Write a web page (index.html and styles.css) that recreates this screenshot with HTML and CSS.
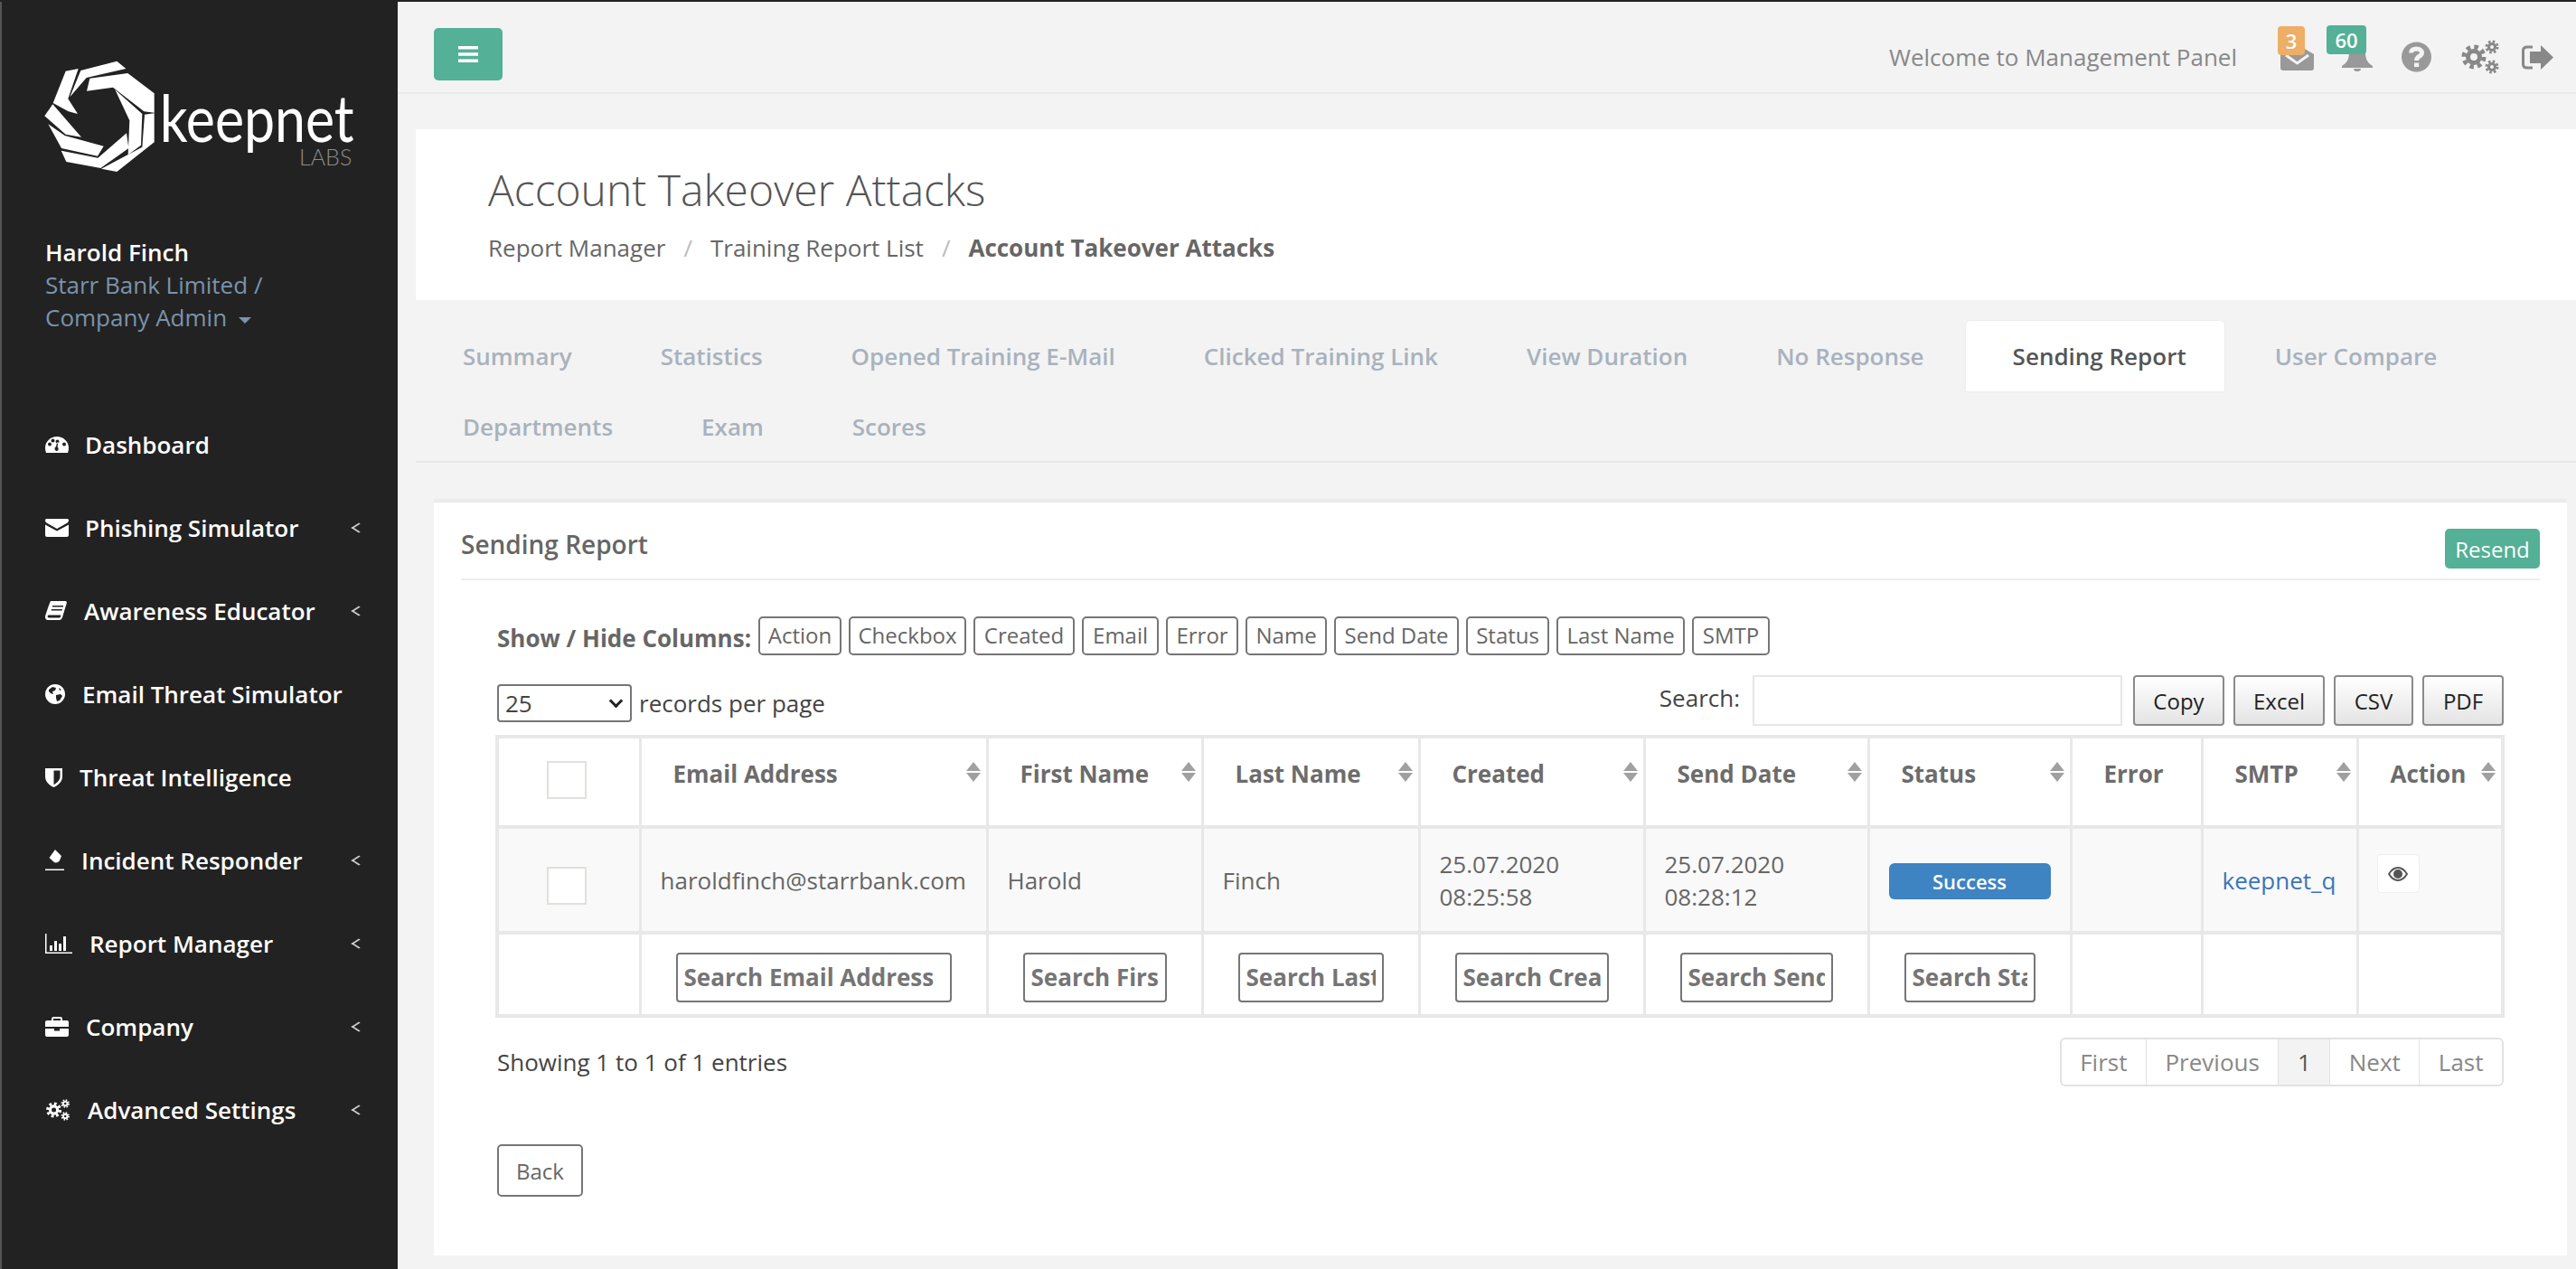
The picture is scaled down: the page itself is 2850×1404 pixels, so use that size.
FILE: index.html
```html
<!DOCTYPE html>
<html lang="en">
<head>
    <meta charset="UTF-8">
    <title>Account Takeover Attacks</title>
    <link rel="stylesheet" href="styles.css">
</head>
<body>
<div class="page">

    <aside class="sidebar">
        <div class="logo">
            <svg class="logo-mark" viewBox="0 0 1140 480" width="380" height="160">
                <g fill="#fff">
                    <polygon points="86,192 128,86 170,78 136,178 168,228 137,220"/>
                    <polygon points="142,172 178,84 298,53 328,78 197,108"/>
                    <polygon points="198,152 208,110 334,93 422,160 422,224 388,220 285,140"/>
                    <polygon points="292,148 382,228 378,332 335,364 340,250"/>
                    <polygon points="390,230 422,226 422,322 298,420 246,410 382,338"/>
                    <polygon points="113,350 235,374 330,292 337,342 244,408 130,387"/>
                    <polygon points="70,262 125,300 254,335 234,368 114,342"/>
                    <polygon points="58,235 85,196 180,305 128,296"/>
                </g>
                <text class="logo-word" x="440" y="322" textLength="645" lengthAdjust="spacingAndGlyphs">keepnet</text>
                <text class="logo-labs" x="903" y="400" textLength="175" lengthAdjust="spacingAndGlyphs">LABS</text>
            </svg>
        </div>
        <div class="profile">
            <strong>Harold Finch</strong>
            <span>Starr Bank Limited /</span>
            <span>Company Admin <i class="caret"></i></span>
        </div>
        <nav class="menu">
            <a class="menu-item">
                <svg class="ico" width="26" height="20" viewBox="0 0 26 20"><path fill="#fff" fill-rule="evenodd" d="M13 1C6 1 0 6.500 0 13.500c0 2 .4 3.700 1 5.500h24c.7-1.800 1-3.500 1-5.500C26 6.500 20 1 13 1zM5 11.500a2 2 0 1 1 0-4 2 2 0 0 1 0 4zm3.500-4a2 2 0 1 1 0-4 2 2 0 0 1 0 4zm7-1a2 2 0 1 1-4 0 2 2 0 0 1 4 0zM13 17a2.500 2.500 0 0 1-1.200-4.700L13.500 7l1 .3-1 5.200A2.500 2.500 0 0 1 13 17zm8-5.500a2 2 0 1 1 0-4 2 2 0 0 1 0 4z"/></svg>
                <span class="gap-18">Dashboard</span>
            </a>
            <a class="menu-item">
                <svg class="ico" width="26" height="20" viewBox="0 0 26 20"><path fill="#fff" d="M1.500 0h23C25.500 0 26 .8 26 2c0 1-1 2-2 2.800L13 11 2 4.800C1 4.200 0 3 0 2 0 .8.500 0 1.500 0zM0 6.500l13 7 13-7V18c0 1-.8 2-2 2H2c-1.200 0-2-1-2-2z"/></svg>
                <span class="gap-18">Phishing Simulator</span>
                <i class="chev"></i>
            </a>
            <a class="menu-item">
                <svg class="ico" width="24" height="22" viewBox="0 0 24 22"><path fill="#fff" fill-rule="evenodd" d="M6 0h17l1 1.500L19 18c-.4 1.400-1.500 3-3.500 3H3c-2 0-3-1.500-3-3.500C0 16.500 5 1.500 6 0zm2 5v1.500h12V5zM6.800 9v1.500h12V9zM4 15.500c-1.300 0-1.600 1.500-1.200 2.300.3.500.8.700 1.400.7h11.500c.5 0 1-.4 1.200-1l.5-2z"/></svg>
                <span class="gap-19">Awareness Educator</span>
                <i class="chev"></i>
            </a>
            <a class="menu-item">
                <svg class="ico" width="22" height="22" viewBox="0 0 22 22"><circle cx="11" cy="11" r="11" fill="#fff"/><path fill="#222" d="M4 6l4-3 4 1-1 3-3 1 1 3-3-1-2-2zM12 12l5-1 2 2-3 5-3 1-1-4zM15 4l3 2-2 1z"/></svg>
                <span class="gap-19">Email Threat Simulator</span>
            </a>
            <a class="menu-item">
                <svg class="ico" width="19" height="22" viewBox="0 0 19 22"><path fill="#fff" fill-rule="evenodd" d="M0 1h19v9c0 6-5 10-9.500 12C5 20 0 16 0 10zM9.500 3.500v15.700C13 17.500 16.500 14 16.500 10V3.500z"/></svg>
                <span class="gap-19">Threat Intelligence</span>
            </a>
            <a class="menu-item">
                <svg class="ico" width="21" height="24" viewBox="0 0 21 24"><path fill="#fff" d="M11 0l7 7-2 5c-1 2-4 3-6 2L4.500 9zM0 21.500h21V23H0z"/></svg>
                <span class="gap-19">Incident Responder</span>
                <i class="chev"></i>
            </a>
            <a class="menu-item">
                <svg class="ico" width="30" height="22" viewBox="0 0 30 22"><path fill="#fff" d="M0 0h1.500v20.500H30V22H0zM5 13h3v6H5zM10 8h3v11h-3zM15 11h3v8h-3zM20 3h3v16h-3z"/></svg>
                <span class="gap-19">Report Manager</span>
                <i class="chev"></i>
            </a>
            <a class="menu-item">
                <svg class="ico" width="26" height="22" viewBox="0 0 26 22"><path fill="#fff" fill-rule="evenodd" d="M9 0h8c1 0 2 1 2 2v2h5c1.200 0 2 .8 2 2v5H0V6c0-1.200.8-2 2-2h5V2c0-1 1-2 2-2zm0 2v2h8V2zM0 13h10v2.500h6V13h10v7c0 1.200-.8 2-2 2H2c-1.200 0-2-.8-2-2z"/></svg>
                <span class="gap-19">Company</span>
                <i class="chev"></i>
            </a>
            <a class="menu-item">
                <svg class="ico" width="28" height="24" viewBox="0 0 42 38"><g fill="none" stroke="#fff"><circle cx="14" cy="19" r="6.500" stroke-width="5"/><circle cx="14" cy="19" r="11" stroke-width="5" stroke-dasharray="4.500 4.140"/><circle cx="34" cy="8" r="3.500" stroke-width="3"/><circle cx="34" cy="8" r="6" stroke-width="3" stroke-dasharray="2.500 2.210"/><circle cx="34" cy="30" r="3.500" stroke-width="3"/><circle cx="34" cy="30" r="6" stroke-width="3" stroke-dasharray="2.500 2.210"/></g></svg>
                <span class="gap-19">Advanced Settings</span>
                <i class="chev"></i>
            </a>
        </nav>
    </aside>

    <main class="main">
        <header class="topbar">
            <button class="menu-btn">
                <svg width="22" height="20" viewBox="0 0 22 20"><path fill="#fff" d="M0 1h22v3.500H0zM0 8.200h22v3.500H0zM0 15.500h22V19H0z"/></svg>
            </button>
            <div class="top-right">
                <span class="welcome">Welcome to Management Panel</span>
                <div class="top-icon mail-icon">
                    <svg width="37" height="29" viewBox="0 0 37 29"><path fill="#999" d="M18.500 0L37 11v15c0 2-1 3-3 3H3c-2 0-3-1-3-3V11z"/><path fill="none" stroke="#f3f3f3" stroke-width="3" d="M6 12l12.500 9L31 12"/></svg>
                    <span class="badge badge-orange">3</span>
                </div>
                <div class="top-icon bell-icon">
                    <svg width="34" height="31" viewBox="0 0 34 31"><path fill="#999" d="M17 0c6 0 9 4 9 10 0 8 3 12 8 15v2H0v-2c5-3 8-7 8-15C8 4 11 0 17 0z"/><path fill="#999" d="M13 28h8a4 3 0 0 1-8 0z"/></svg>
                    <span class="badge badge-green">60</span>
                </div>
                <svg class="help-icon" width="33" height="34" viewBox="0 0 33 34"><circle cx="16.500" cy="17" r="16.500" fill="#999"/><path fill="none" stroke="#f3f3f3" stroke-width="5" d="M10.500 12.500c0-3 2.500-4.500 6-4.500s6 1.800 6 4.500c0 4-6 3.500-6 8.500"/><path fill="#f3f3f3" d="M14 23.500h5.200V28H14z"/></svg>
                <svg class="gear-icon" width="42" height="38" viewBox="0 0 42 38"><g fill="none" stroke="#888"><circle cx="14" cy="19" r="6.500" stroke-width="5"/><circle cx="14" cy="19" r="11" stroke-width="5" stroke-dasharray="4.500 4.140"/><circle cx="34" cy="8" r="3.500" stroke-width="3"/><circle cx="34" cy="8" r="6" stroke-width="3" stroke-dasharray="2.500 2.210"/><circle cx="34" cy="30" r="3.500" stroke-width="3"/><circle cx="34" cy="30" r="6" stroke-width="3" stroke-dasharray="2.500 2.210"/></g></svg>
                <svg class="exit-icon" width="35" height="27" viewBox="0 0 35 27"><path fill="none" stroke="#888" stroke-width="3" d="M12 2H6C3 2 1.500 3.500 1.500 6v15c0 2.500 1.500 4 4.500 4h6"/><path fill="#888" d="M21 0l14 13.500L21 27v-7H9V7h12z"/></svg>
            </div>
        </header>

        <section class="page-title">
            <h1>Account Takeover Attacks</h1>
            <ol class="crumbs">
                <li>Report Manager</li>
                <li>Training Report List</li>
                <li class="current">Account Takeover Attacks</li>
            </ol>
        </section>

        <ul class="tabs">
            <li>Summary</li>
            <li>Statistics</li>
            <li>Opened Training E-Mail</li>
            <li>Clicked Training Link</li>
            <li>View Duration</li>
            <li>No Response</li>
            <li class="active">Sending Report</li>
            <li>User Compare</li>
            <li>Departments</li>
            <li>Exam</li>
            <li>Scores</li>
        </ul>

        <section class="card">
            <div class="card-head">
                <h2>Sending Report</h2>
                <button class="resend">Resend</button>
            </div>
            <div class="card-body">
                <div class="columns">
                    <b>Show / Hide Columns:</b>
                    <a class="chip chip-action">Action</a>
                    <a class="chip chip-checkbox">Checkbox</a>
                    <a class="chip chip-created">Created</a>
                    <a class="chip chip-email">Email</a>
                    <a class="chip chip-error">Error</a>
                    <a class="chip chip-name">Name</a>
                    <a class="chip chip-send">Send Date</a>
                    <a class="chip chip-status">Status</a>
                    <a class="chip chip-last">Last Name</a>
                    <a class="chip chip-smtp">SMTP</a>
                </div>

                <div class="toolbar">
                    <label class="length">
                        <span class="select-wrap">
                            <select><option>25</option><option>50</option><option>100</option></select>
                        </span>
                        records per page
                    </label>
                    <div class="tools">
                        <label class="search">Search: <input type="text"></label>
                        <button class="export btn-copy">Copy</button>
                        <button class="export btn-excel">Excel</button>
                        <button class="export btn-csv">CSV</button>
                        <button class="export btn-pdf">PDF</button>
                    </div>
                </div>

                <table class="report">
                    <colgroup>
                        <col class="c-check"><col class="c-email"><col class="c-first"><col class="c-last"><col class="c-created">
                        <col class="c-send"><col class="c-status"><col class="c-error"><col class="c-smtp"><col class="c-action">
                    </colgroup>
                    <thead>
                        <tr>
                            <th class="check-cell"><span class="box"></span></th>
                            <th><div class="th-in">Email Address<i class="sort"></i></div></th>
                            <th><div class="th-in">First Name<i class="sort"></i></div></th>
                            <th><div class="th-in">Last Name<i class="sort"></i></div></th>
                            <th><div class="th-in">Created<i class="sort"></i></div></th>
                            <th><div class="th-in">Send Date<i class="sort"></i></div></th>
                            <th><div class="th-in">Status<i class="sort"></i></div></th>
                            <th><div class="th-in">Error</div></th>
                            <th><div class="th-in">SMTP<i class="sort"></i></div></th>
                            <th><div class="th-in">Action<i class="sort"></i></div></th>
                        </tr>
                    </thead>
                    <tbody>
                        <tr class="data-row">
                            <td class="check-cell"><span class="box"></span></td>
                            <td>haroldfinch@starrbank.com</td>
                            <td>Harold</td>
                            <td>Finch</td>
                            <td>25.07.2020<br>08:25:58</td>
                            <td>25.07.2020<br>08:28:12</td>
                            <td><span class="status">Success</span></td>
                            <td></td>
                            <td><a class="smtp">keepnet_q</a></td>
                            <td class="action-cell">
                                <span class="eye-btn">
                                    <svg width="22" height="18" viewBox="0 0 22 18"><path fill="none" stroke="#555" stroke-width="2" d="M1 9c3-5 6-7 10-7s7 2 10 7c-3 5-6 7-10 7S4 14 1 9z"/><circle cx="11" cy="9" r="5" fill="#555"/></svg>
                                </span>
                            </td>
                        </tr>
                    </tbody>
                    <tfoot>
                        <tr class="filter-row">
                            <td></td>
                            <td><input placeholder="Search Email Address"></td>
                            <td><input placeholder="Search First Name"></td>
                            <td><input placeholder="Search Last Name"></td>
                            <td><input placeholder="Search Created"></td>
                            <td><input placeholder="Search Send Date"></td>
                            <td><input placeholder="Search Status"></td>
                            <td></td>
                            <td></td>
                            <td></td>
                        </tr>
                    </tfoot>
                </table>

                <div class="table-foot">
                    <span class="info">Showing 1 to 1 of 1 entries</span>
                    <ul class="pager">
                        <li>First</li>
                        <li>Previous</li>
                        <li class="on">1</li>
                        <li>Next</li>
                        <li>Last</li>
                    </ul>
                </div>

                <button class="back">Back</button>
            </div>
        </section>
    </main>

</div>
</body>
</html>
```
FILE: styles.css
```css
html, body {
    margin: 0;
    height: 1404px;
    overflow: hidden;
}

body {
    font-family: "Open Sans", sans-serif;
    font-size: 26px;
    color: #666;
    background-color: #f3f3f3;
}

.page {
    display: flex;
    height: 1404px;
    border-top: 2px solid #222;
    box-sizing: border-box;
}

/* sidebar */
.sidebar {
    width: 440px;
    flex: none;
    background-color: #222;
    border-left: 2px solid #555;
    box-sizing: border-box;
    color: #fff;
}

.logo {
    height: 208px;
    padding: 48px 0 0 28px;
    box-sizing: border-box;
}

.logo-mark {
    display: block;
    overflow: visible;
}

.logo-word {
    font-family: Lato, sans-serif;
    font-size: 215px;
    font-weight: 400;
    fill: #fff;
}

.logo-labs {
    font-family: Lato, sans-serif;
    font-size: 74px;
    font-weight: 300;
    fill: #8c8c8c;
}

.profile {
    height: 236px;
    padding: 51px 0 0 48px;
    box-sizing: border-box;
    line-height: 36px;
    color: #7b93ab;
}

.profile strong {
    display: block;
    color: #fff;
    font-weight: 600;
}

.profile span {
    display: block;
}

.caret {
    display: inline-block;
    width: 0;
    height: 0;
    margin-left: 6px;
    vertical-align: 3px;
    border-top: 7px solid #7b93ab;
    border-left: 7px solid transparent;
    border-right: 7px solid transparent;
}

.menu-item {
    display: flex;
    align-items: center;
    height: 92px;
    padding-left: 48px;
    font-weight: 600;
    color: #fff;
}

.ico {
    flex: none;
}

.gap-18 {
    margin-left: 18px;
}

.gap-19 {
    margin-left: 19px;
}

.chev {
    margin-left: auto;
    margin-right: 38px;
    width: 10px;
    height: 10px;
    box-sizing: border-box;
    border-left: 2px solid #ccc;
    border-bottom: 2px solid #ccc;
    transform: rotate(45deg) skew(-12deg, -12deg);
}

/* main column */
.main {
    flex: 1;
    min-width: 0;
}

.topbar {
    display: flex;
    justify-content: space-between;
    align-items: center;
    height: 100px;
    padding-left: 40px;
    border-bottom: 2px solid #ebebeb;
}

.menu-btn {
    display: flex;
    align-items: center;
    justify-content: center;
    width: 76px;
    height: 58px;
    margin-top: 16px;
    border: 0;
    border-radius: 5px;
    background-color: #54b096;
}

.top-right {
    display: flex;
    align-items: center;
    padding-right: 25px;
    padding-top: 22px;
}

.welcome {
    color: #888;
    margin-right: 48px;
}

.top-icon {
    position: relative;
    display: flex;
}

.mail-icon {
    margin-right: 31px;
}

.bell-icon {
    margin-right: 32px;
}

.help-icon {
    margin-right: 33px;
}

.gear-icon {
    margin-right: 25px;
}

.badge {
    position: absolute;
    top: -20px;
    height: 32px;
    line-height: 32px;
    text-align: center;
    color: #fff;
    font-size: 22px;
    font-weight: 600;
    border-radius: 4px;
}

.badge-orange {
    left: -3px;
    width: 30px;
    background-color: #eeae66;
}

.badge-green {
    left: -17px;
    width: 44px;
    background-color: #54b096;
}

.page-title {
    margin: 39px 0 0 20px;
    height: 189px;
    padding: 33px 0 0 80px;
    box-sizing: border-box;
    background-color: #fff;
}

.page-title h1 {
    margin: 0;
    font-size: 48px;
    font-weight: 300;
    line-height: 68px;
    color: #555;
}

.crumbs {
    display: flex;
    margin: 12px 0 0;
    padding: 0;
    list-style: none;
    line-height: 36px;
}

.crumbs li + li::before {
    content: "/";
    margin: 0 20px;
    color: #bbb;
}

.crumbs .current {
    font-weight: 700;
}

.crumbs .current::before {
    font-weight: 400;
}

.tabs {
    display: flex;
    flex-wrap: wrap;
    align-content: flex-start;
    height: 155px;
    margin: 23px 0 0 20px;
    padding: 0 0 0 3px;
    list-style: none;
    border-bottom: 2px solid #e7e7e7;
}

.tabs li {
    height: 78px;
    line-height: 78px;
    padding: 0 49px;
    font-weight: 600;
    color: #a9b2bd;
}

.tabs .active {
    margin: 0 7px 0 -3px;
    padding: 0 42px 0 52px;
    background-color: #fff;
    color: #555;
    border-radius: 5px 5px 0 0;
    box-shadow: 0 0 2px #ddd;
}

/* report card */
.card {
    margin: 40px 10px 0 40px;
    height: 837px;
    box-sizing: border-box;
    background-color: #fff;
    border-top: 4px solid #ebebeb;
    padding: 0 30px;
}

.card-head {
    display: flex;
    justify-content: space-between;
    align-items: center;
    height: 71px;
    padding-top: 13px;
    border-bottom: 2px solid #ececec;
}

.card-head h2 {
    margin: 0 0 5px;
    font-size: 28px;
    font-weight: 600;
    color: #666;
}

.resend {
    width: 105px;
    height: 44px;
    margin-top: 5px;
    padding: 0;
    border: 0;
    border-radius: 5px;
    background-color: #54b096;
    color: #fff;
    font-family: inherit;
    font-size: 24px;
}

.card-body {
    padding: 0 40px;
}

.columns {
    display: flex;
    align-items: center;
    gap: 8px;
    margin-top: 40px;
    height: 43px;
}

.columns b {
    font-weight: 700;
    margin-top: 4px;
}

.chip {
    height: 43px;
    line-height: 37px;
    box-sizing: border-box;
    text-align: center;
    border: 2px solid #767676;
    border-radius: 5px;
    font-size: 24px;
    color: #666;
}

.chip-action { width: 92px; }
.chip-checkbox { width: 130px; }
.chip-created { width: 112px; }
.chip-email { width: 85px; }
.chip-error { width: 80px; }
.chip-name { width: 90px; }
.chip-send { width: 138px; }
.chip-status { width: 92px; }
.chip-last { width: 142px; }
.chip-smtp { width: 86px; }

.toolbar {
    display: flex;
    justify-content: space-between;
    align-items: flex-start;
    margin-top: 22px;
}

.length {
    display: flex;
    align-items: center;
    gap: 8px;
    margin-top: 10px;
    color: #444;
}

.select-wrap {
    position: relative;
    display: block;
    height: 42px;
}

.select-wrap::after {
    content: "";
    position: absolute;
    top: 13px;
    right: 12px;
    width: 8px;
    height: 8px;
    border-right: 3px solid #222;
    border-bottom: 3px solid #222;
    transform: rotate(45deg);
    pointer-events: none;
}

.select-wrap select {
    display: block;
    width: 149px;
    height: 42px;
    padding: 0 0 0 7px;
    border: 2px solid #767676;
    border-radius: 4px;
    background-color: #fff;
    font-family: inherit;
    font-size: 26px;
    color: #444;
    appearance: none;
}

.tools {
    display: flex;
    align-items: center;
    gap: 10px;
}

.search {
    display: flex;
    align-items: flex-start;
    gap: 14px;
    margin-right: 2px;
    line-height: 50px;
    color: #444;
}

.search input {
    width: 409px;
    height: 56px;
    box-sizing: border-box;
    border: 2px solid #e7e7e7;
    outline: 0;
}

.export {
    height: 56px;
    box-sizing: border-box;
    padding: 0;
    border: 2px solid #8a8a8a;
    border-radius: 4px;
    background: linear-gradient(#fff, #e4e4e4);
    font-family: inherit;
    font-size: 24px;
    color: #222;
}

.btn-copy { width: 101px; }
.btn-excel { width: 101px; }
.btn-csv { width: 88px; }
.btn-pdf { width: 90px; }

/* table */
.report {
    width: 2219px;
    margin: 10px 0 0 -2px;
    border-collapse: collapse;
    table-layout: fixed;
    border: 4px solid #e8e8e8;
}

.c-check { width: 158px; }
.c-email { width: 384px; }
.c-first { width: 238px; }
.c-last { width: 240px; }
.c-created { width: 249px; }
.c-send { width: 248px; }
.c-status { width: 224px; }
.c-error { width: 145px; }
.c-smtp { width: 172px; }
.c-action { width: 161px; }

.report th,
.report td {
    border-left: 3px solid #e8e8e8;
    border-right: 3px solid #e8e8e8;
    border-top: 4px solid #e8e8e8;
    border-bottom: 4px solid #e8e8e8;
    padding: 0;
}

.report th {
    height: 100px;
    box-sizing: border-box;
    vertical-align: top;
    font-weight: 700;
    text-align: left;
    color: #6c6c6c;
}

.th-in {
    display: flex;
    justify-content: space-between;
    padding: 21px 6px 0 35px;
    line-height: 36px;
}

.check-cell {
    text-align: center;
}

.report th.check-cell {
    padding: 25px 5px 0 0;
}

.box {
    display: block;
    width: 44px;
    height: 42px;
    margin: 0 auto;
    box-sizing: border-box;
    border: 2px solid #e2e0dc;
    background-color: #fff;
}

.sort {
    position: relative;
    display: block;
    flex: none;
    width: 16px;
    height: 22px;
    margin-top: 5px;
}

.sort::before,
.sort::after {
    content: "";
    position: absolute;
    left: 0;
    border-left: 8px solid transparent;
    border-right: 8px solid transparent;
}

.sort::before {
    top: 0;
    border-bottom: 10px solid #a0a0a0;
}

.sort::after {
    bottom: 0;
    border-top: 10px solid #a0a0a0;
}

.data-row td {
    height: 117px;
    box-sizing: border-box;
    padding: 0 0 0 21px;
    background-color: #f9f9f9;
    line-height: 36px;
    white-space: nowrap;
    overflow: hidden;
}

.data-row .check-cell {
    padding: 13px 5px 0 0;
}

.status {
    display: block;
    width: 179px;
    height: 40px;
    margin-top: 2px;
    line-height: 40px;
    text-align: center;
    border-radius: 6px;
    background-color: #3e83c2;
    color: #fff;
    font-size: 22px;
    font-weight: 600;
}

.smtp {
    color: #3c75b5;
}

.data-row .action-cell {
    vertical-align: top;
    padding-left: 20px;
}

.eye-btn {
    display: flex;
    align-items: center;
    justify-content: center;
    width: 47px;
    height: 43px;
    margin-top: 28px;
    box-sizing: border-box;
    border: 1px solid #eee;
    border-radius: 4px;
    background-color: #fff;
}

.filter-row td {
    height: 92px;
    box-sizing: border-box;
    padding: 6px 38px 0;
}

.filter-row input {
    display: block;
    width: 100%;
    height: 55px;
    box-sizing: border-box;
    padding: 0 7px;
    border: 2px solid #767676;
    border-radius: 4px;
    font-family: inherit;
    font-size: 26px;
    font-weight: 700;
}

.filter-row input::placeholder {
    color: #757575;
    opacity: 1;
}

.table-foot {
    display: flex;
    justify-content: space-between;
    align-items: center;
    margin-top: 22px;
}

.info {
    color: #444;
}

.pager {
    display: flex;
    height: 54px;
    margin: 0;
    padding: 0;
    box-sizing: border-box;
    list-style: none;
    border: 2px solid #e2e2e2;
    border-radius: 6px;
}

.pager li {
    padding: 0 20.5px;
    line-height: 50px;
    color: #888;
}

.pager li + li {
    border-left: 1px solid #e2e2e2;
}

.pager .on {
    background-color: #f3f3f3;
    color: #555;
}

.back {
    display: block;
    width: 95px;
    height: 58px;
    margin-top: 64px;
    padding: 0;
    border: 2px solid #767676;
    border-radius: 5px;
    background-color: #fff;
    font-family: inherit;
    font-size: 24px;
    color: #666;
}
```
